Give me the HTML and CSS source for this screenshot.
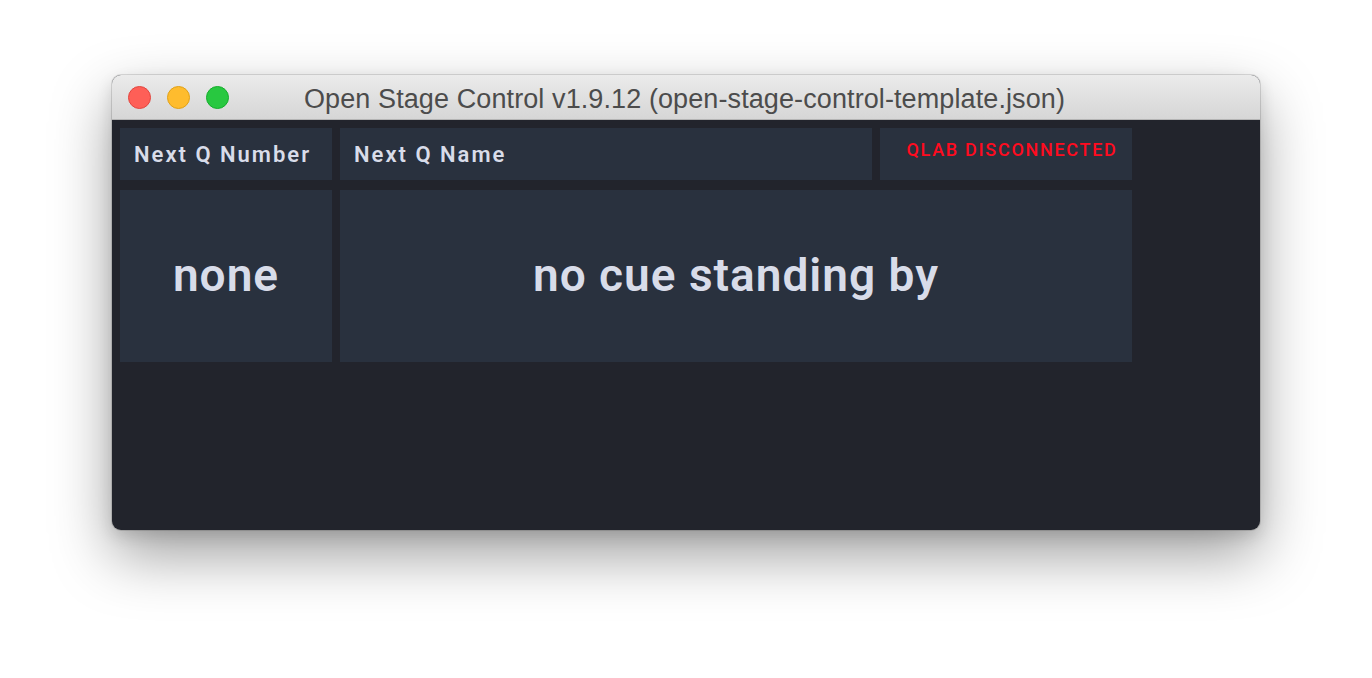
FILE: index.html
```html
<!DOCTYPE html>
<html>
<head>
<meta charset="utf-8">
<link rel="stylesheet" href="styles.css">
</head>
<body>
<div class="stage">
  <div class="window">
    <div class="titlebar">
      <div class="lights">
        <span class="light red"></span>
        <span class="light yellow"></span>
        <span class="light green"></span>
      </div>
      <div class="title">Open Stage Control v1.9.12 (open-stage-control-template.json)</div>
    </div>
    <div class="content">
      <div class="grid">
        <div class="panel label">Next Q Number</div>
        <div class="panel label">Next Q Name</div>
        <div class="panel status">QLAB DISCONNECTED</div>
        <div class="panel big">none</div>
        <div class="panel big wide">no cue standing by</div>
      </div>
    </div>
  </div>
</div>
</body>
</html>
```
FILE: styles.css
```css
html, body {
  margin: 0;
  padding: 0;
  background: #ffffff;
  width: 1372px;
  height: 678px;
  overflow: hidden;
}
.stage {
  padding: 75px 0 0 112px;
}
.window {
  width: 1148px;
  height: 455px;
  border-radius: 9px;
  overflow: hidden;
  display: flex;
  flex-direction: column;
  box-shadow: 0 0 0 1px rgba(0,0,0,0.12), 0 25px 60px rgba(0,0,0,0.38), 0 6px 16px rgba(0,0,0,0.12);
  background: #22242c;
}
.titlebar {
  height: 44px;
  flex: none;
  background: linear-gradient(#ebebeb, #d6d6d6);
  border-bottom: 1px solid #b4b4b4;
  position: relative;
  display: flex;
  align-items: center;
  justify-content: center;
}
.lights {
  position: absolute;
  left: 16px;
  top: 11px;
  display: flex;
  gap: 16px;
}
.light {
  width: 23px;
  height: 23px;
  border-radius: 50%;
  box-sizing: border-box;
}
.red { background: #fe5f57; border: 1px solid #e2463f; }
.yellow { background: #febc2e; border: 1px solid #e1a116; }
.green { background: #28c840; border: 1px solid #14ae2b; }
.title {
  font-family: "Liberation Sans", Arial, sans-serif;
  font-size: 27px;
  color: #4c4c4c;
  letter-spacing: 0.1px;
  margin-left: -3px;
  margin-top: 4px;
}
.content {
  flex: 1;
  padding: 8px 8px;
}
.grid {
  display: grid;
  grid-template-columns: 212px 532px 252px;
  grid-template-rows: 52px 172px;
  column-gap: 8px;
  row-gap: 10px;
}
.panel {
  background: #29313e;
  color: #d8dce9;
  font-family: Roboto, "Noto Sans", sans-serif;
  font-weight: 700;
  box-sizing: border-box;
}
.label {
  font-size: 22px;
  font-weight: 600;
  letter-spacing: 2px;
  padding: 14px 0 0 14px;
}
.status {
  color: #ff0b1f;
  font-size: 18px;
  font-weight: 500;
  letter-spacing: 1.7px;
  text-align: center;
  padding: 11px 0 0 12px;
}
.big {
  font-size: 46px;
  font-weight: 600;
  letter-spacing: 1px;
  display: flex;
  align-items: center;
  justify-content: center;
  padding-bottom: 2px;
}
.wide {
  grid-column: 2 / 4;
}
```
